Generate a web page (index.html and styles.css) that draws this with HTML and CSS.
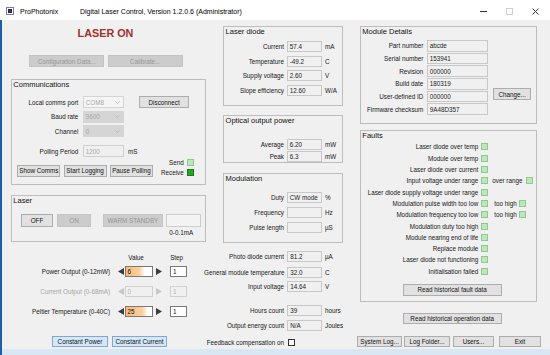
FILE: index.html
```html
<!DOCTYPE html>
<html lang="en">
<head>
    <meta charset="UTF-8">
    <meta name="viewport" content="width=device-width, initial-scale=1.0">
    <title>Digital Laser Control</title>
    <link rel="stylesheet" href="styles.css">
</head>
<body>
<div class="window">
    <div class="titlebar">
        <svg class="app-icon" width="8" height="8" viewBox="0 0 8 8"><rect x="0.5" y="0.5" width="7" height="7" fill="#fff" stroke="#7d7f9c"/><rect x="2" y="2" width="4" height="4" fill="#1d2163"/><rect x="3.3" y="3.3" width="1.4" height="1.4" fill="#b03a5a"/></svg>
        <span class="app-name">ProPhotonix</span>
        <span class="app-title">Digital Laser Control, Version 1.2.0.6 (Administrator)</span>
        <div class="win-controls">
            <span class="win-btn"><svg width="7" height="7" viewBox="0 0 7 7"><line x1="0" y1="3.5" x2="7" y2="3.5" stroke="#333"/></svg></span>
            <span class="win-btn"><svg width="7" height="7" viewBox="0 0 7 7"><rect x="0.5" y="0.5" width="6" height="6" fill="none" stroke="#cfcfcf"/></svg></span>
            <span class="win-btn"><svg width="7" height="7" viewBox="0 0 7 7"><path d="M0.5 0.5L6.5 6.5M6.5 0.5L0.5 6.5" stroke="#333"/></svg></span>
        </div>
    </div>

    <div class="client">
        <!-- left: state, comms, laser, setpoints -->
        <div class="col col-left">
            <div class="laser-state">LASER ON</div>
            <div class="top-buttons">
                <button class="btn off">Configuration Data...</button>
                <button class="btn off">Calibrate...</button>
            </div>

            <div class="group comms">
                <div class="group-title">Communications</div>
                <div class="row comms-row first">
                    <span class="lbl">Local comms port</span>
                    <span class="field combo open">COM8 <svg width="5" height="3" viewBox="0 0 5 3"><polyline points="0.3,0.3 2.5,2.5 4.7,0.3" fill="none" stroke="#b4b4b4" stroke-width="0.7"/></svg></span>
                    <button class="btn disconnect">Disconnect</button>
                </div>
                <div class="row comms-row">
                    <span class="lbl">Baud rate</span>
                    <span class="field combo locked">9600 <svg width="5" height="3" viewBox="0 0 5 3"><polyline points="0.3,0.3 2.5,2.5 4.7,0.3" fill="none" stroke="#b4b4b4" stroke-width="0.7"/></svg></span>
                </div>
                <div class="row comms-row">
                    <span class="lbl">Channel</span>
                    <span class="field combo locked">0 <svg width="5" height="3" viewBox="0 0 5 3"><polyline points="0.3,0.3 2.5,2.5 4.7,0.3" fill="none" stroke="#b4b4b4" stroke-width="0.7"/></svg></span>
                </div>
                <div class="row comms-row polling">
                    <span class="lbl">Polling Period</span>
                    <span class="field dim">1200</span>
                    <span class="unit">mS</span>
                </div>
                <div class="comms-actions">
                    <button class="btn">Show Comms</button>
                    <button class="btn">Start Logging</button>
                    <button class="btn">Pause Polling</button>
                    <div class="leds">
                        <div class="led-row">Send <span class="led"></span></div>
                        <div class="led-row">Receive <span class="led on"></span></div>
                    </div>
                </div>
            </div>

            <div class="group laser">
                <div class="group-title">Laser</div>
                <div class="laser-buttons">
                    <button class="btn b-off">OFF</button>
                    <button class="btn off b-on">ON</button>
                    <button class="btn off b-warm">WARM STANDBY</button>
                    <span class="field b-blank"></span>
                </div>
                <div class="range">0-0.1mA</div>
            </div>

            <div class="spin-head"><span class="h-value">Value</span><span class="h-step">Step</span></div>
            <div class="spin-row first">
                <span class="lbl">Power Output (0-12mW)</span>
                <svg class="arrow-l" width="6" height="7" viewBox="0 0 6 7"><polygon points="6,0 0,3.5 6,7"/></svg>
                <span class="field spin-value" style="--pct: 50%">6</span>
                <svg class="arrow-r" width="6" height="7" viewBox="0 0 6 7"><polygon points="0,0 6,3.5 0,7"/></svg>
                <span class="field spin-step">1</span>
            </div>
            <div class="spin-row disabled">
                <span class="lbl">Current Output (0-68mA)</span>
                <svg class="arrow-l" width="6" height="7" viewBox="0 0 6 7"><polygon points="6,0 0,3.5 6,7"/></svg>
                <span class="field spin-value">0</span>
                <svg class="arrow-r" width="6" height="7" viewBox="0 0 6 7"><polygon points="0,0 6,3.5 0,7"/></svg>
                <span class="field spin-step">1</span>
            </div>
            <div class="spin-row">
                <span class="lbl">Peltier Temperature (0-40C)</span>
                <svg class="arrow-l" width="6" height="7" viewBox="0 0 6 7"><polygon points="6,0 0,3.5 6,7"/></svg>
                <span class="field spin-value" style="--pct: 62%">25</span>
                <svg class="arrow-r" width="6" height="7" viewBox="0 0 6 7"><polygon points="0,0 6,3.5 0,7"/></svg>
                <span class="field spin-step">1</span>
            </div>
            <div class="mode-buttons">
                <button class="btn mode">Constant Power</button>
                <button class="btn mode">Constant Current</button>
            </div>
        </div>

        <!-- middle: live readings -->
        <div class="col col-mid">
            <div class="group diode">
                <div class="group-title">Laser diode</div>
                <div class="grp-row first"><span class="lbl">Current</span><span class="field">57.4</span><span class="unit">mA</span></div>
                <div class="grp-row"><span class="lbl">Temperature</span><span class="field">-49.2</span><span class="unit">C</span></div>
                <div class="grp-row"><span class="lbl">Supply voltage</span><span class="field">2.60</span><span class="unit">V</span></div>
                <div class="grp-row"><span class="lbl">Slope efficiency</span><span class="field">12.60</span><span class="unit">W/A</span></div>
            </div>
            <div class="group optical">
                <div class="group-title">Optical output power</div>
                <div class="grp-row first"><span class="lbl">Average</span><span class="field">6.20</span><span class="unit">mW</span></div>
                <div class="grp-row second"><span class="lbl">Peak</span><span class="field">6.3</span><span class="unit">mW</span></div>
            </div>
            <div class="group modulation">
                <div class="group-title">Modulation</div>
                <div class="grp-row first"><span class="lbl">Duty</span><span class="field">CW mode</span><span class="unit">%</span></div>
                <div class="grp-row"><span class="lbl">Frequency</span><span class="field"></span><span class="unit">Hz</span></div>
                <div class="grp-row"><span class="lbl">Pulse length</span><span class="field"></span><span class="unit">µS</span></div>
            </div>
            <div class="readouts">
                <div class="grp-row r-photo"><span class="lbl">Photo diode current</span><span class="field">81.2</span><span class="unit">µA</span></div>
                <div class="grp-row r-temp"><span class="lbl">General module temperature</span><span class="field">32.0</span><span class="unit">C</span></div>
                <div class="grp-row r-volt"><span class="lbl">Input voltage</span><span class="field">14.64</span><span class="unit">V</span></div>
                <div class="grp-row r-hours"><span class="lbl">Hours count</span><span class="field">39</span><span class="unit">hours</span></div>
                <div class="grp-row r-energy"><span class="lbl">Output energy count</span><span class="field">N/A</span><span class="unit">Joules</span></div>
                <div class="grp-row r-feedback"><span class="lbl">Feedback compensation on</span><span class="checkbox"></span></div>
            </div>
        </div>

        <!-- right: module details, faults, actions -->
        <div class="col col-right">
            <div class="group module">
                <div class="group-title">Module Details</div>
                <div class="mod-row first"><span class="lbl">Part number</span><span class="field">abcde</span></div>
                <div class="mod-row"><span class="lbl">Serial number</span><span class="field">153941</span></div>
                <div class="mod-row"><span class="lbl">Revision</span><span class="field">000000</span></div>
                <div class="mod-row"><span class="lbl">Build date</span><span class="field">180319</span></div>
                <div class="mod-row"><span class="lbl">User-defined ID</span><span class="field">000000</span><button class="btn change">Change...</button></div>
                <div class="mod-row"><span class="lbl">Firmware checksum</span><span class="field">9A48D357</span></div>
            </div>
            <div class="group faults">
                <div class="group-title">Faults</div>
                <div class="fault-row first"><span class="lbl">Laser diode over temp</span><span class="led"></span></div>
                <div class="fault-row"><span class="lbl">Module over temp</span><span class="led"></span></div>
                <div class="fault-row"><span class="lbl">Laser diode over current</span><span class="led"></span></div>
                <div class="fault-row"><span class="lbl">Input voltage under range</span><span class="led"></span><span class="extra">over range</span><span class="led"></span></div>
                <div class="fault-row"><span class="lbl">Laser diode supply voltage under range</span><span class="led"></span></div>
                <div class="fault-row"><span class="lbl">Modulation pulse width too low</span><span class="led"></span><span class="extra hi">too high</span><span class="led"></span></div>
                <div class="fault-row"><span class="lbl">Modulation frequency too low</span><span class="led"></span><span class="extra hi">too high</span><span class="led"></span></div>
                <div class="fault-row"><span class="lbl">Modulation duty too high</span><span class="led"></span></div>
                <div class="fault-row"><span class="lbl">Module nearing end of life</span><span class="led"></span></div>
                <div class="fault-row"><span class="lbl">Replace module</span><span class="led"></span></div>
                <div class="fault-row"><span class="lbl">Laser diode not functioning</span><span class="led"></span></div>
                <div class="fault-row"><span class="lbl">Initialisation failed</span><span class="led"></span></div>
                <button class="btn fault-btn">Read historical fault data</button>
            </div>
            <button class="btn op-btn">Read historical operation data</button>
            <div class="bottom-buttons">
                <button class="btn b-syslog">System Log...</button>
                <button class="btn b-folder">Log Folder...</button>
                <button class="btn b-users">Users...</button>
                <button class="btn b-exit">Exit</button>
            </div>
        </div>
    </div>
    <div class="band"></div>
</div>
</body>
</html>
```

FILE: styles.css
```css
* { box-sizing: border-box; }
body { margin: 0; font-family: "Liberation Sans", Arial, sans-serif; font-size: 6.3px; color: #161616; background: #f0f0f0; }
.window { width: 550px; height: 355px; overflow: hidden; background: #f0f0f0; }

/* title bar */
.titlebar { height: 20px; padding-top: 2px; display: flex; align-items: center; background: #fff; font-size: 7px; color: #000; }
.app-icon { margin-left: 6px; flex: none; }
.app-name { width: 60px; margin-left: 6px; }
.win-controls { display: flex; margin-left: auto; margin-right: 2px; }
.win-btn { width: 26px; display: flex; justify-content: center; }

.client { display: flex; height: 329px; border-left: 2px solid #1f5dab; }
.band { height: 6px; background: #d9e7f5; border-left: 2px solid #1f5dab; }
.col { flex: none; }
.col-left { width: 213px; }
.col-mid { width: 140px; }
.col-right { width: 195px; }

/* shared controls */
.group { border: 1px solid #bdbdbd; }
.group-title { font-size: 7.5px; line-height: 9px; padding-left: 1.3px; color: #111; }
.row { display: flex; align-items: center; }
.lbl { flex: none; text-align: right; white-space: nowrap; }
.unit { flex: none; margin-left: 3.3px; white-space: nowrap; }
.btn { flex: none; display: flex; align-items: center; justify-content: center; padding: 0; font: inherit; color: #111; background: #e1e1e1; border: 1px solid #adadad; white-space: nowrap; }
.btn.off { background: #cccccc; border-color: #c4c4c4; color: #979797; }
.btn.mode { background: #d5e7f8; border-color: #7fa9d3; }
.field { flex: none; height: 100%; display: flex; align-items: center; padding-left: 2px; background: #f0f0f0; border: 1px solid #c8c8c8; color: #222; white-space: nowrap; overflow: hidden; }
.combo { justify-content: space-between; padding-right: 3px; color: #a8a8a8; }
.combo.open { background: #f5f5f5; border-color: #d4d4d4; }
.combo.locked { background: #d5d5d5; border-color: #d5d5d5; }
.field.dim { color: #a8a8a8; border-color: #d0d0d0; }
.led { flex: none; width: 7px; height: 7px; background: #bde6bd; border: 1px solid #90c890; }
.led.on { background: #26a626; border-color: #1c7c1c; }
.checkbox { flex: none; width: 7.5px; height: 7.5px; margin-left: 3.7px; background: #fff; border: 1px solid #333; }

/* left column */
.laser-state { width: 207px; margin-top: 5.5px; text-align: center; font-size: 10.8px; font-weight: bold; line-height: 14px; color: #a3312d; }
.top-buttons { display: flex; gap: 3.3px; height: 12px; margin-top: 15.5px; padding-left: 27.3px; }
.top-buttons .btn { width: 75px; }
.comms { width: 195px; margin: 12px 0 0 9px; padding-bottom: 7px; }
.comms-row { height: 12px; margin-top: 2.5px; }
.comms-row.first { margin-top: 7px; }
.comms-row.polling { margin-top: 8px; }
.comms-row .lbl { width: 66.3px; }
.comms-row .field { width: 41.3px; margin-left: 4.4px; }
.comms-row .unit { margin-left: 4px; }
.disconnect { width: 49.7px; height: 11.7px; margin-left: 15.3px; }
.comms-actions { display: flex; align-items: flex-end; height: 19px; margin-top: 1px; padding-left: 5.3px; }
.comms-actions .btn { width: 43px; height: 12.4px; margin-right: 3.3px; }
.leds { margin-left: auto; margin-right: 11px; }
.led-row { display: flex; align-items: center; justify-content: flex-end; gap: 3.3px; height: 9.5px; }
.laser { width: 195px; margin: 10px 0 0 9px; padding-bottom: 3.6px; }
.laser-buttons { display: flex; height: 12.4px; margin-top: 9.3px; padding-left: 8.7px; }
.b-off { width: 32.6px; }
.b-on { width: 33.4px; margin-left: 4px; }
.b-warm { width: 59.4px; margin-left: 12.6px; }
.b-blank { width: 35px; margin-left: 3px; background: #f3f3f3; border-color: #cdcdcd; }
.range { margin-top: 2.3px; line-height: 8.4px; padding-left: 157.3px; }
.spin-head { display: flex; height: 9px; line-height: 9px; margin-top: 11px; padding-left: 120px; }
.h-value { width: 28px; text-align: center; }
.h-step { width: 17.3px; margin-left: 18px; text-align: center; }
.spin-row { display: flex; align-items: center; height: 11.6px; margin-top: 8.4px; }
.spin-row.first { margin-top: 3.7px; }
.spin-row .lbl { width: 108px; }
.arrow-l { flex: none; margin-left: 7.6px; fill: #3c3c3c; }
.arrow-r { flex: none; margin-left: 3.4px; fill: #3c3c3c; }
.spin-value { width: 28.3px; margin-left: 1px; background: linear-gradient(to right, #f6bd78 0, #f9cf9c var(--pct, 0%), #fff calc(var(--pct, 0%) + 22%)); border-color: #7a7a7a; color: #111; }
.spin-step { width: 17.3px; margin-left: 7.7px; background: #fff; border-color: #7a7a7a; color: #111; }
.spin-row.disabled .lbl { color: #a4a4a4; }
.spin-row.disabled .field { background: #f0f0f0; border-color: #d0d0d0; color: #b0b0b0; }
.spin-row.disabled svg { fill: #c6c6c6; }
.mode-buttons { display: flex; gap: 3.4px; height: 11.6px; margin-top: 18.4px; padding-left: 49.7px; }
.mode-buttons .btn:first-child { width: 56.6px; }
.mode-buttons .btn:last-child { width: 55.6px; }

/* middle column */
.col-mid .group { width: 119.4px; margin-left: 8.3px; }
.grp-row { display: flex; align-items: center; height: 11px; margin-top: 3.5px; }
.grp-row .lbl { width: 59.7px; }
.grp-row .field { width: 35px; margin-left: 2.7px; }
.diode { margin-top: 6px; padding-bottom: 9.3px; }
.diode .first { margin-top: 5.2px; }
.optical { margin-top: 9px; padding-bottom: 0.5px; }
.optical .first { margin-top: 14px; }
.optical .second { margin-top: 1px; }
.modulation { margin-top: 10px; padding-bottom: 8.7px; }
.modulation .grp-row { margin-top: 4px; }
.modulation .first { margin-top: 8.7px; }
.readouts .lbl { width: 80px; margin-left: -11px; }
.readouts .field { width: 34.4px; margin-left: 3.3px; }
.r-photo { margin-top: 8.5px; }
.r-temp { margin-top: 4.6px; }
.r-volt { margin-top: 3.4px; }
.r-hours { margin-top: 12.3px; }
.r-energy { margin-top: 4.7px; }
.r-feedback { height: 9px; margin-top: 6.6px; }

/* right column */
.col-right .group { margin-left: 5px; }
.module { width: 176.7px; margin-top: 6px; padding-bottom: 8px; }
.mod-row { display: flex; align-items: center; height: 11.5px; margin-top: 1.2px; }
.mod-row.first { margin-top: 4px; }
.mod-row .lbl { width: 62.3px; }
.mod-row .field { width: 61.6px; margin-left: 3.4px; }
.change { width: 37.7px; height: 12.7px; margin-left: 5px; margin-bottom: 5px; }
.faults { width: 177px; margin-top: 6px; padding-bottom: 5.6px; }
.fault-row { display: flex; align-items: center; height: 11.3px; }
.fault-row.first { margin-top: 1.35px; }
.fault-row .lbl { width: 117.3px; }
.fault-row .lbl + .led { margin-left: 2.7px; }
.extra { margin-left: 4.3px; white-space: nowrap; }
.extra + .led { margin-left: 4px; }
.extra.hi { margin-left: 6.3px; }
.extra.hi + .led { margin-left: 2.3px; }
.fault-btn { width: 99px; height: 11.4px; margin: 7.3px 0 0 41.7px; }
.op-btn { width: 99px; height: 10.7px; margin: 11px 0 0 47.7px; }
.bottom-buttons { display: flex; height: 10.7px; margin-top: 12px; padding-left: 2px; }
.b-syslog { width: 45px; }
.b-folder { width: 46px; margin-left: 2px; }
.b-users { width: 41px; margin-left: 3px; }
.b-exit { width: 42px; margin-left: 5px; }
```
